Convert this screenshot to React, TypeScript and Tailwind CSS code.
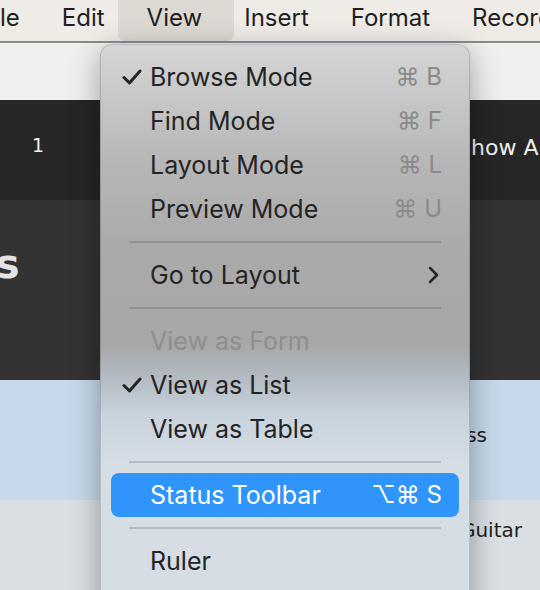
import React from 'react';

type Item =
    | { kind: 'item'; label: string; checked?: boolean; shortcut?: string; disabled?: boolean; active?: boolean; submenu?: boolean }
    | { kind: 'sep' };

const items: Item[] = [
    { kind: 'item', label: 'Browse Mode', checked: true, shortcut: '⌘ B' },
    { kind: 'item', label: 'Find Mode', shortcut: '⌘ F' },
    { kind: 'item', label: 'Layout Mode', shortcut: '⌘ L' },
    { kind: 'item', label: 'Preview Mode', shortcut: '⌘ U' },
    { kind: 'sep' },
    { kind: 'item', label: 'Go to Layout', submenu: true },
    { kind: 'sep' },
    { kind: 'item', label: 'View as Form', disabled: true },
    { kind: 'item', label: 'View as List', checked: true },
    { kind: 'item', label: 'View as Table' },
    { kind: 'sep' },
    { kind: 'item', label: 'Status Toolbar', shortcut: '⌥⌘ S', active: true },
    { kind: 'sep' },
    { kind: 'item', label: 'Ruler' },
];

const Check = () => (
    <svg width="20" height="16" viewBox="0 0 20 16" fill="none" stroke="currentColor" strokeWidth="3" strokeLinecap="round" strokeLinejoin="round">
        <path d="M2 8.5 7.5 14 18 2" />
    </svg>
);

const Chevron = () => (
    <svg width="12" height="18" viewBox="0 0 12 18" fill="none" stroke="currentColor" strokeWidth="2.5" strokeLinecap="round" strokeLinejoin="round">
        <path d="M3 2l7 7-7 7" />
    </svg>
);

const MenuRow: React.FC<{ item: Extract<Item, { kind: 'item' }> }> = ({ item }) => {
    const text = item.active ? 'text-white' : item.disabled ? 'text-[#8e8e8e]' : 'text-[#242424]';
    return (
        <div className={`mx-[10px] h-[44px] rounded-[8px] flex items-center ${item.active ? 'bg-[#2f95fa]' : ''} ${text}`}>
            <div className="w-[39px] pl-[11px] flex items-center">{item.checked && <Check />}</div>
            <div className="flex-1 text-[25px] leading-none">{item.label}</div>
            {item.shortcut && (
                <div className={`pr-[17px] text-[24px] leading-none ${item.active ? 'text-white' : 'text-[#8a8a8a]'}`}>{item.shortcut}</div>
            )}
            {item.submenu && (
                <div className="pr-[20px] text-[#262626] flex items-center"><Chevron /></div>
            )}
        </div>
    );
};

const App: React.FC = () => {
    return (
        <div className="relative w-[540px] h-[590px] overflow-hidden bg-[#dadfe4] font-['Inter','Noto_Sans',sans-serif]">
            {/* menu bar */}
            <div className="h-[43px] bg-[#efece7] border-b-2 border-[#8c8c8c] flex items-stretch text-[24px] text-[#1f1f1f] whitespace-nowrap">
                <div className="pr-[21px] flex items-center pb-[6px]">le</div>
                <div className="px-[21px] flex items-center pb-[6px]">Edit</div>
                <div className="relative px-[21px] flex items-center pb-[6px]">
                    <div className="absolute left-[-8px] right-[-11px] top-0 bottom-0 rounded-b-[7px] bg-[#dcd9d3]" />
                    <span className="relative">View</span>
                </div>
                <div className="px-[21px] flex items-center pb-[6px]">Insert</div>
                <div className="px-[21px] flex items-center pb-[6px]">Format</div>
                <div className="px-[21px] flex items-center pb-[6px]">Records</div>
            </div>

            {/* window behind */}
            <div className="h-[57px] bg-[#efefef]" />
            <div className="h-[100px] bg-[#262626] flex items-center font-['DejaVu_Sans',sans-serif] text-[#f0f0f0] whitespace-nowrap">
                <span className="ml-[32px] text-[19px] pb-[10px]">1</span>
                <span className="ml-[413px] text-[22px] pb-[6px]">Show All</span>
            </div>
            <div className="h-[180px] bg-[#333333] pt-[44px] font-['DejaVu_Sans',sans-serif]">
                <span className="block ml-[-18px] text-[40px] font-bold text-[#e4e4e4] leading-none">ls</span>
            </div>
            <div className="h-[120px] bg-[#c6d9ea] flex items-center justify-end font-['DejaVu_Sans',sans-serif] text-[20px] text-[#1e1e1e] pb-[10px]">
                <span className="mr-[53px]">Bass</span>
            </div>
            <div className="h-[90px] bg-[#dadfe4] pt-[15px] flex justify-end font-['DejaVu_Sans',sans-serif] text-[20px] text-[#1e1e1e]">
                <span className="mr-[18px]">Guitar</span>
            </div>

            {/* dropdown */}
            <div className="absolute left-[100px] top-[44px] w-[370px] h-[580px] rounded-[12px] border border-black/15 shadow-[0_8px_30px_rgba(0,0,0,0.35)] bg-[linear-gradient(180deg,#d5d5d5_0px,#c8c8c8_50px,#b6b6b6_120px,#aaaaaa_200px,#a7a7a7_300px,#b4bcc4_335px,#c9d3dd_370px,#d5dde5_420px,#d6dce2_580px)] pt-[10px]">
                {items.map((it, i) =>
                    it.kind === 'sep' ? (
                        <div key={i} className="h-[22px] flex items-center mx-[28px]">
                            <div className="h-[2px] w-full bg-black/15" />
                        </div>
                    ) : (
                        <MenuRow key={i} item={it} />
                    )
                )}
            </div>
        </div>
    );
};

export default App;
